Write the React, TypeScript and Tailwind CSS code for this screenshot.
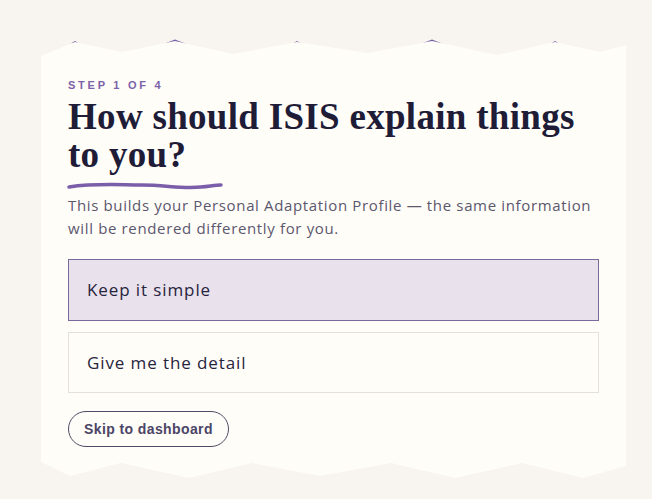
import React from "react";

const topPts: [number, number][] = [
  [0, 15], [34, 1], [81, 11], [134, 0], [192, 13], [256, 1], [327, 12], [391, 0], [456, 14], [514, 1], [559, 11], [585, 4],
];
const botPts: [number, number][] = [
  [585, 425], [542, 437], [481, 422], [414, 437], [350, 422], [279, 435], [211, 422], [148, 437], [80, 422], [29, 435], [0, 421],
];

function CardShape() {
  const pts = [...topPts, ...botPts].map(([x, y]) => `${x},${y}`).join(" ");
  return (
    <svg
      className="absolute left-0 top-0 overflow-visible"
      width="585"
      height="440"
      viewBox="0 0 585 440"
      aria-hidden
    >
      <polygon points="120,4 134,-1.5 148,4" fill="#7460a3" />
      <polygon points="377,4 391,-1.5 405,4" fill="#7460a3" />
      <polygon points="30,2.5 34,0 38,2.5" fill="#7460a3" />
      <polygon points="252,2.5 256,0 260,2.5" fill="#7460a3" />
      <polygon points="510,2.5 514,0 518,2.5" fill="#7460a3" />
      <polygon points={pts} fill="#fffdf8" />
    </svg>
  );
}

export default function App() {
  return (
    <div className="min-h-[499px] w-full bg-[#f8f4f0] pt-[41px] pl-[41px]">
      <div className="relative w-[585px] h-[440px]">
        <CardShape />
        <div className="relative flex flex-col px-[27px] pt-[37px]">
          <div
            className="text-[11px] font-bold tracking-[0.25em] text-[#7c62a8] leading-[14px]"
            style={{ fontFamily: "'Liberation Sans', Arial, sans-serif" }}
          >
            STEP 1 OF 4
          </div>
          <h1
            className="mt-[6px] text-[37px] font-bold leading-[38px] tracking-[0.3px] text-[#1f1c38]"
            style={{ fontFamily: "'Liberation Serif', serif" }}
          >
            How should ISIS explain things to you?
          </h1>
          <svg width="160" height="12" viewBox="0 0 160 12" className="mt-[6px] -ml-[2px]" aria-hidden>
            <path
              d="M3 7 C 30 3, 55 5, 75 5 C 100 5, 115 9, 135 7 C 145 6, 150 5, 155 5"
              stroke="#7b5ea9"
              strokeWidth="3.5"
              strokeLinecap="round"
              fill="none"
            />
          </svg>
          <p
            className="mt-[2px] text-[15px] leading-[23px] tracking-[0.65px] text-[#5b576e]"
            style={{ fontFamily: "'Open Sans', sans-serif" }}
          >
            This builds your Personal Adaptation Profile — the same information will be rendered differently for you.
          </p>
          <div className="mt-[19px] flex flex-col gap-[11px]" style={{ fontFamily: "'Open Sans', sans-serif" }}>
            <div className="flex h-[62px] items-center border border-[#7a6a9c] bg-[#e9e1ec] px-[18px] text-[17px] tracking-[0.9px] text-[#27243d]">
              Keep it simple
            </div>
            <div className="flex h-[61px] items-center border border-[#e4e0dc] px-[18px] text-[17px] tracking-[0.9px] text-[#27243d]">
              Give me the detail
            </div>
          </div>
          <div className="mt-[18px]">
            <button
              className="h-[36px] rounded-full border border-[#4f4a66] px-[15px] text-[14px] tracking-[0.4px] font-bold text-[#4b4566]"
              style={{ fontFamily: "'Liberation Sans', Arial, sans-serif" }}
            >
              Skip to dashboard
            </button>
          </div>
        </div>
      </div>
    </div>
  );
}
